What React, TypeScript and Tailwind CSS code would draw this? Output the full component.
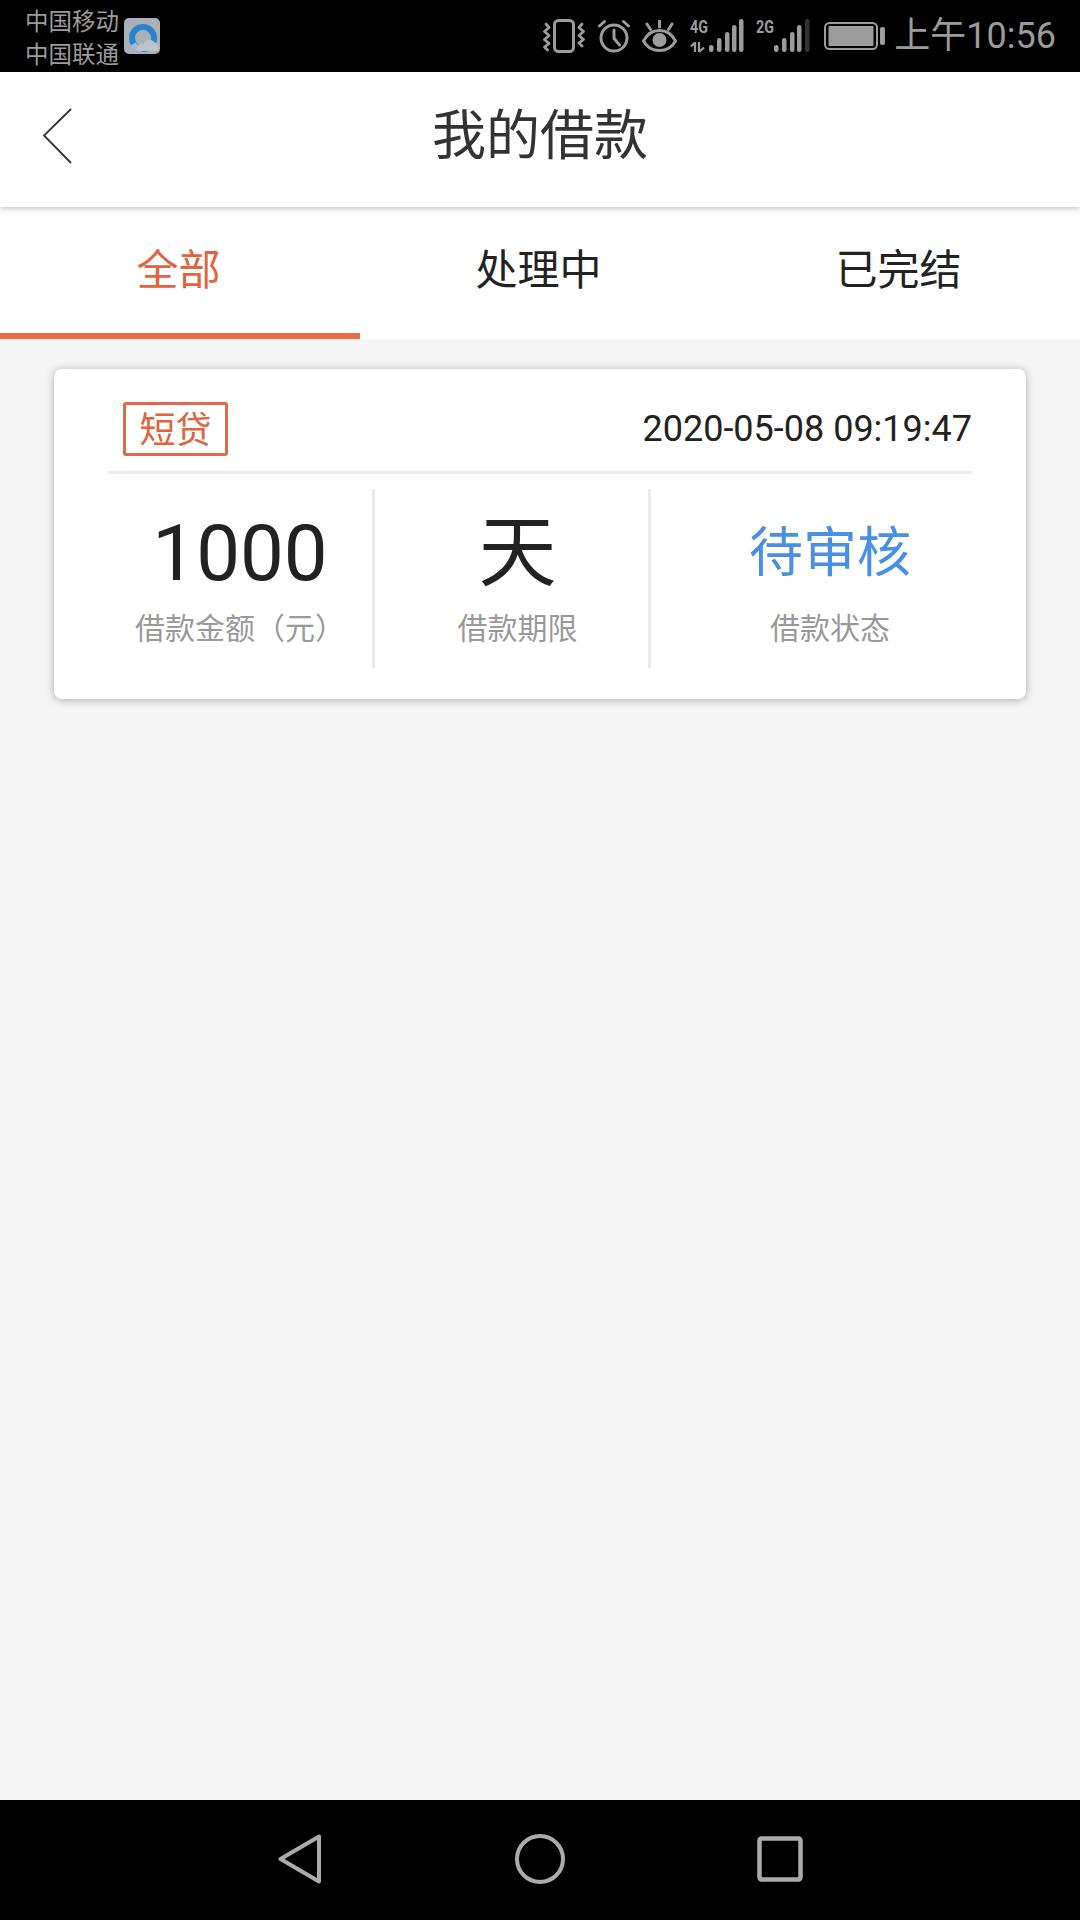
import React from "react";

const CJK = "font-['Roboto','Noto_Sans_CJK_SC',sans-serif]";

function Signal({ label, dim, net, bars }: { label: string; dim?: boolean; net?: boolean; bars: number[] }) {
  const tops = [26, 19, 13, 6, 0];
  return (
    <svg width="54" height="40" viewBox="0 -6 54 40" className="block mt-[-6px]">
      <text x="0" y="14" fontFamily="Roboto" fontWeight="700" fontSize="18" textLength="18" lengthAdjust="spacingAndGlyphs" fill="#9c9c9c">{label}</text>
      {net && (
        <g stroke="#9c9c9c" strokeWidth="2.200" fill="none">
          <path d="M5 33V23M1 27.500L5 23.500" />
          <path d="M9 23V33M9 33L14 28.500" />
        </g>
      )}
      <g fill="#9c9c9c">
        {bars.map((x, i) => (
          <rect key={x} x={x} y={tops[i]} width="4.500" height={33 - tops[i]} rx="2.200" fill={dim && i === 4 ? "#333" : "#9c9c9c"} />
        ))}
      </g>
    </svg>
  );
}

export default function App() {
  return (
    <div className={`w-[1080px] h-[1920px] flex flex-col bg-[#f5f5f5] ${CJK}`}>
      <div className="h-[72px] shrink-0 bg-black flex items-center justify-between pl-[25px] pr-[24px]">
        <div className="flex items-center">
          <div className="text-[23.500px] leading-[33px] text-[#9b9b9b] pt-[5px]">
            <div>中国移动</div>
            <div>中国联通</div>
          </div>
          <svg width="36" height="36" viewBox="0 0 36 36" className="ml-[5px] block">
            <rect width="36" height="36" rx="5" fill="#a9b1b9" />
            <circle cx="19" cy="20" r="11" fill="none" stroke="#2b82cf" strokeWidth="6" />
            <path d="M9 26a11 11 0 0 0 9 5" fill="none" stroke="#9dbbd3" strokeWidth="6" />
            <path d="M13 33c-1-5 3-8 7-7 1-4 7-6 10-2 3 1 5 4 5 9z" fill="#bcc3ca" />
          </svg>
        </div>
        <div className="flex items-center">
          <svg width="42" height="34" viewBox="0 0 42 34" className="block" fill="none" stroke="#9c9c9c">
            <rect x="11.500" y="1.500" width="19" height="31" rx="4" strokeWidth="3" />
            <path d="M3 5l3 3.500-4.500 4 4.500 4-4.500 4 4.500 4-4.500 3.500 3 3M39 5l-3 3.500 4.500 4-4.500 4 4.500 4-4.500 3.500 3 3" strokeWidth="2.800" strokeLinecap="round" strokeLinejoin="round" />
          </svg>
          <svg width="32" height="34" viewBox="0 0 32 34" className="block ml-[13px]" fill="none" stroke="#9c9c9c" strokeWidth="3">
            <circle cx="16" cy="19" r="13" />
            <path d="M16 11v8.500l5.500 6.500M1.500 7l5-4.500M30.500 7l-5-4.500" strokeLinecap="round" />
          </svg>
          <svg width="35" height="32" viewBox="0 0 35 32" className="block ml-[12px]" fill="none" stroke="#9c9c9c" strokeWidth="3">
            <path d="M1.500 21C5 14 11 10.500 17.500 10.500S30 14 33.500 21C30 27.500 24 30.500 17.500 30.500S5 27.500 1.500 21z" />
            <circle cx="17.500" cy="20" r="7" fill="#9c9c9c" stroke="none" />
            <path d="M17.500 1v6M5 4l3.500 5.500M30 4l-3.500 5.500" strokeLinecap="round" />
          </svg>
          <div className="ml-[13px]"><Signal label="4G" net bars={[19, 27, 35, 42, 49]} /></div>
          <div className="ml-[12px]"><Signal label="2G" dim bars={[18, 26, 34, 41, 49]} /></div>
          <svg width="61" height="28" viewBox="0 0 61 28" className="block ml-[14px]" fill="none">
            <rect x="1" y="1" width="52" height="26" rx="4.500" stroke="#9c9c9c" strokeWidth="2" />
            <rect x="4.500" y="4" width="45" height="20" rx="1" fill="#9c9c9c" />
            <rect x="56" y="5" width="5" height="18" rx="2" fill="#9c9c9c" />
          </svg>
          <span className="ml-[9px] text-[36px] leading-none text-[#9b9b9b]">上午10:56</span>
        </div>
      </div>

      <header className="relative z-10 h-[135px] shrink-0 bg-white flex items-center justify-center pb-[5px] shadow-[0_2px_5px_rgba(0,0,0,0.22)]">
        <svg width="30" height="56" viewBox="0 0 30 56" className="absolute left-[42px] top-[36px]" fill="none" stroke="#333" strokeWidth="1.800">
          <path d="M29 1L2 27.500L29 55" />
        </svg>
        <h1 className="text-[54px] leading-none text-[#333] font-normal">我的借款</h1>
      </header>

      <div className="h-[132px] shrink-0 bg-white flex">
        <div className="w-[360px] flex items-center justify-center pr-[3px] border-b-[6px] border-[#ec6a45] text-[#e0643f] text-[42px]">全部</div>
        <div className="w-[360px] flex items-center justify-center pr-[3px] pb-[6px] text-[#222] text-[42px]">处理中</div>
        <div className="w-[360px] flex items-center justify-center pr-[3px] pb-[6px] text-[#222] text-[42px]">已完结</div>
      </div>

      <main className="flex-1 pt-[30px] px-[54px]">
        <div className="h-[330px] bg-white rounded-[8px] shadow-[0_1px_8px_rgba(0,0,0,0.3)]">
          <div className="mx-[54px] h-[105px] pt-[18px] border-b-[3px] border-[#ebebeb] flex items-center justify-between">
            <span className="ml-[15px] w-[105px] h-[54px] pt-[3px] border-[3px] border-[#e06b4a] rounded-[3px] flex items-center justify-center text-[36px] leading-none text-[#e0643f]">短贷</span>
            <span className="text-[36px] leading-none text-[#222]">2020-05-08 09:19:47</span>
          </div>
          <div className="flex pl-[54px] pt-[15px]">
            <div className="w-[267px] h-[179px] border-r-[3px] border-[#ebebeb] flex flex-col items-center">
              <div className="h-[125px] pt-[5px] flex items-center text-[78px] leading-none text-[#222]">1000</div>
              <div className="text-[30px] leading-none text-[#999]">借款金额（元）</div>
            </div>
            <div className="w-[276px] h-[179px] border-r-[3px] border-[#ebebeb] flex flex-col items-center pl-[12px]">
              <div className="h-[125px] pt-[5px] flex items-center text-[78px] leading-none text-[#222]">天</div>
              <div className="text-[30px] leading-none text-[#999]">借款期限</div>
            </div>
            <div className="w-[358px] h-[179px] flex flex-col items-center">
              <div className="h-[125px] pt-[5px] flex items-center text-[54px] leading-none text-[#4a90e2]">待审核</div>
              <div className="text-[30px] leading-none text-[#999]">借款状态</div>
            </div>
          </div>
        </div>
      </main>

      <nav className="h-[120px] shrink-0 bg-black relative flex items-center">
        <div className="flex items-center pl-[278px] pb-[2px]">
          <svg width="44" height="50" viewBox="0 0 44 50" fill="none" stroke="#ababab" strokeWidth="4" strokeLinejoin="round" className="block">
            <path d="M41 2.500L2.500 25L41 47.500z" />
          </svg>
          <svg width="50" height="50" viewBox="0 0 50 50" fill="none" stroke="#ababab" strokeWidth="4" className="block ml-[193px]">
            <circle cx="25" cy="25" r="23" />
          </svg>
          <svg width="46" height="46" viewBox="0 0 46 46" fill="none" stroke="#ababab" strokeWidth="4.500" strokeLinejoin="round" className="block ml-[192px]">
            <rect x="2.500" y="2.500" width="41" height="41" rx="2" />
          </svg>
        </div>
      </nav>
    </div>
  );
}
